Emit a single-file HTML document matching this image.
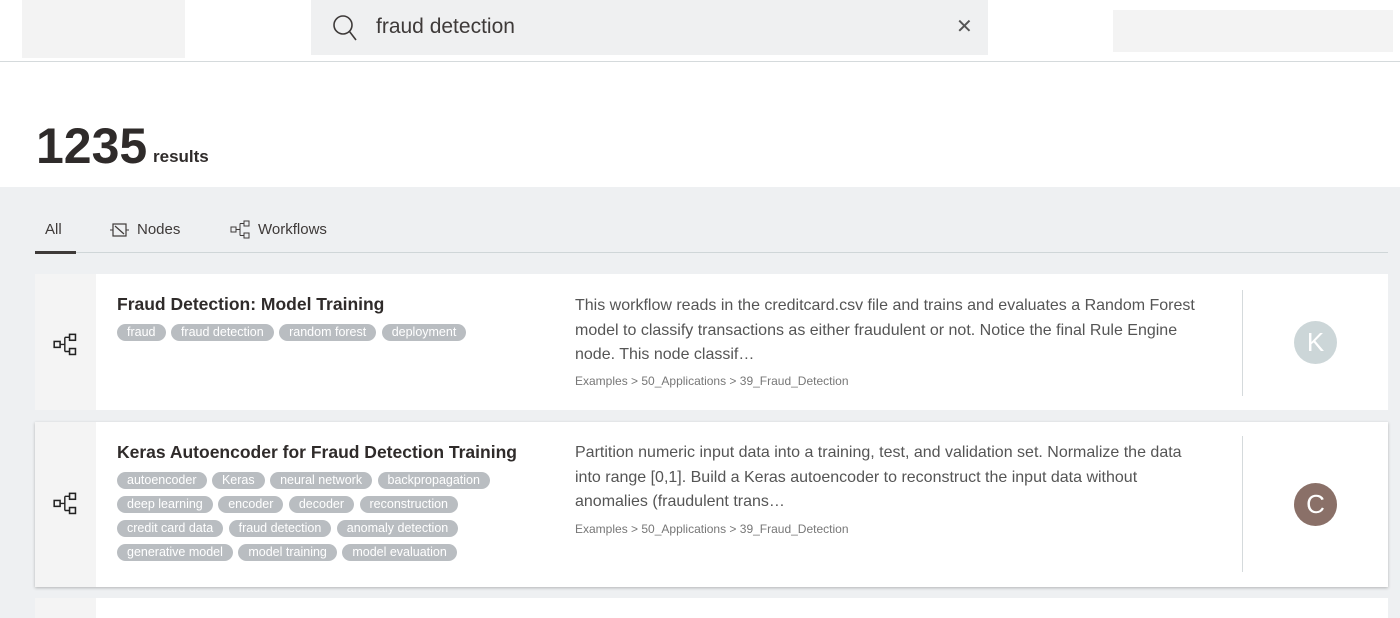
<!DOCTYPE html>
<html><head><style>
*{margin:0;padding:0;box-sizing:border-box}
body{width:1400px;height:607px;overflow:hidden;background:#eef0f2;font-family:"Liberation Sans",sans-serif;position:relative;color:#3e3a39}
.hdr{position:absolute;left:0;top:0;width:1400px;height:62px;background:#fff;border-bottom:1px solid #d5dadc}
.top{position:absolute;left:0;top:62px;width:1400px;height:125px;background:#fff}
.logo{position:absolute;left:22px;top:0;width:163px;height:58px;background:#f3f3f3}
.search{position:absolute;left:311px;top:0;width:677px;height:55px;background:#eff0f1}
.search .q{position:absolute;left:65px;top:15px;font-size:21px;color:#3e3a39}
.search .x{position:absolute;left:645px;top:14px;font-size:20px;color:#555}
.rt{position:absolute;left:1113px;top:10px;width:280px;height:42px;background:#f3f3f3}
.cnt{position:absolute;left:36px;top:117px;font-size:50px;font-weight:bold;color:#2f2b2a;letter-spacing:0}
.res{position:absolute;left:153px;top:147px;font-size:17px;font-weight:bold;color:#2f2b2a}
.tab{position:absolute;top:221px;font-size:15px;color:#3e3a39}
.line{position:absolute;left:35px;top:252px;width:1353px;height:1px;background:#cfd6d8}
.act{position:absolute;left:35px;top:251px;width:41px;height:3px;background:#3e3a39}
.card{position:absolute;left:35px;width:1353px;background:#fff}
.strip{position:absolute;left:0;top:0;width:61px;height:100%;background:#f4f4f4}
.ic{position:absolute;left:18px}
.title{position:absolute;left:82px;font-size:17.5px;font-weight:bold;color:#2f2b2a}
.tags{position:absolute;left:82px;width:420px}
.tag{display:inline-block;background:#b9bdc1;color:#fff;font-size:12.5px;height:17px;line-height:17px;padding:0 10px;border-radius:9px;margin:0 1px 7px 0;vertical-align:top}
.desc{position:absolute;left:540px;width:630px;font-size:16px;line-height:24.5px;color:#555}
.path{position:absolute;left:540px;font-size:12px;color:#777}
.div{position:absolute;left:1207px;width:1px;background:#d5dadc}
.av{position:absolute;left:1259px;width:43px;height:43px;border-radius:50%;color:#fff;font-size:26px;text-align:center;line-height:43px}
</style></head><body>
<div class="hdr"><div class="logo"></div>
<div class="search"><svg style="position:absolute;left:21px;top:14px" width="26" height="28" viewBox="0 0 26 28"><circle cx="11" cy="11" r="9" fill="none" stroke="#3e3a39" stroke-width="1.6"/><line x1="17.5" y1="17.5" x2="24" y2="26" stroke="#3e3a39" stroke-width="1.6"/></svg><div class="q">fraud detection</div><div class="x">✕</div></div>
<div class="rt"></div></div>
<div class="top"></div>
<div class="cnt">1235</div><div class="res">results</div>
<div class="tab" style="left:45px">All</div>
<svg style="position:absolute;left:110px;top:222px" width="20" height="16" viewBox="0 0 20 16"><rect x="3" y="2" width="13" height="12" fill="none" stroke="#3e3a39" stroke-width="1.2"/><line x1="5" y1="4" x2="14" y2="12" stroke="#3e3a39" stroke-width="1.2"/><line x1="0" y1="8" x2="3" y2="8" stroke="#3e3a39"/><line x1="16" y1="8" x2="19" y2="8" stroke="#3e3a39"/></svg>
<div class="tab" style="left:137px">Nodes</div>
<svg style="position:absolute;left:230px;top:220px" width="22" height="20" viewBox="0 0 22 20"><rect x="1" y="7" width="5" height="5" fill="none" stroke="#3e3a39"/><rect x="14" y="1" width="5" height="5" fill="none" stroke="#3e3a39"/><rect x="14" y="13" width="5" height="5" fill="none" stroke="#3e3a39"/><path d="M6 9.5H10M10 3.5V15.5M10 3.5H14M10 15.5H14" fill="none" stroke="#3e3a39"/></svg>
<div class="tab" style="left:258px">Workflows</div>
<div class="line"></div><div class="act"></div>

<div class="card" style="top:274px;height:136px"><div class="strip"></div>
<svg class="ic" style="top:58px" width="26" height="26" viewBox="0 0 22 20"><rect x="1" y="7" width="5" height="5" fill="none" stroke="#222" stroke-width="1.3"/><rect x="14" y="1" width="5" height="5" fill="none" stroke="#222" stroke-width="1.3"/><rect x="14" y="13" width="5" height="5" fill="none" stroke="#222" stroke-width="1.3"/><path d="M6 9.5H10M10 3.5V15.5M10 3.5H14M10 15.5H14" fill="none" stroke="#222" stroke-width="1.2"/></svg>
<div class="title" style="top:20px">Fraud Detection: Model Training</div>
<div class="tags" style="top:50px"><span class="tag">fraud</span> <span class="tag">fraud detection</span> <span class="tag">random forest</span> <span class="tag">deployment</span></div>
<div class="desc" style="top:20px">This workflow reads in the creditcard.csv file and trains and evaluates a Random Forest model to classify transactions as either fraudulent or not. Notice the final Rule Engine node. This node classif…</div>
<div class="path" style="top:100px">Examples &gt; 50_Applications &gt; 39_Fraud_Detection</div>
<div class="div" style="top:16px;height:106px"></div>
<div class="av" style="top:47px;background:#ccd6d8">K</div>
</div>

<div class="card" style="top:422px;height:165px;box-shadow:0 1px 3px rgba(0,0,0,.25)"><div class="strip"></div>
<svg class="ic" style="top:69px" width="26" height="26" viewBox="0 0 22 20"><rect x="1" y="7" width="5" height="5" fill="none" stroke="#222" stroke-width="1.3"/><rect x="14" y="1" width="5" height="5" fill="none" stroke="#222" stroke-width="1.3"/><rect x="14" y="13" width="5" height="5" fill="none" stroke="#222" stroke-width="1.3"/><path d="M6 9.5H10M10 3.5V15.5M10 3.5H14M10 15.5H14" fill="none" stroke="#222" stroke-width="1.2"/></svg>
<div class="title" style="top:20px">Keras Autoencoder for Fraud Detection Training</div>
<div class="tags" style="top:50px"><span class="tag">autoencoder</span> <span class="tag">Keras</span> <span class="tag">neural network</span> <span class="tag">backpropagation</span><br><span class="tag">deep learning</span> <span class="tag">encoder</span> <span class="tag">decoder</span> <span class="tag">reconstruction</span><br><span class="tag">credit card data</span> <span class="tag">fraud detection</span> <span class="tag">anomaly detection</span><br><span class="tag">generative model</span> <span class="tag">model training</span> <span class="tag">model evaluation</span></div>
<div class="desc" style="top:19px">Partition numeric input data into a training, test, and validation set. Normalize the data into range [0,1]. Build a Keras autoencoder to reconstruct the input data without anomalies (fraudulent trans…</div>
<div class="path" style="top:100px">Examples &gt; 50_Applications &gt; 39_Fraud_Detection</div>
<div class="div" style="top:14px;height:136px"></div>
<div class="av" style="top:61px;background:#8a7068">C</div>
</div>
<div class="card" style="top:598px;height:20px"><div class="strip"></div></div>
</body></html>
